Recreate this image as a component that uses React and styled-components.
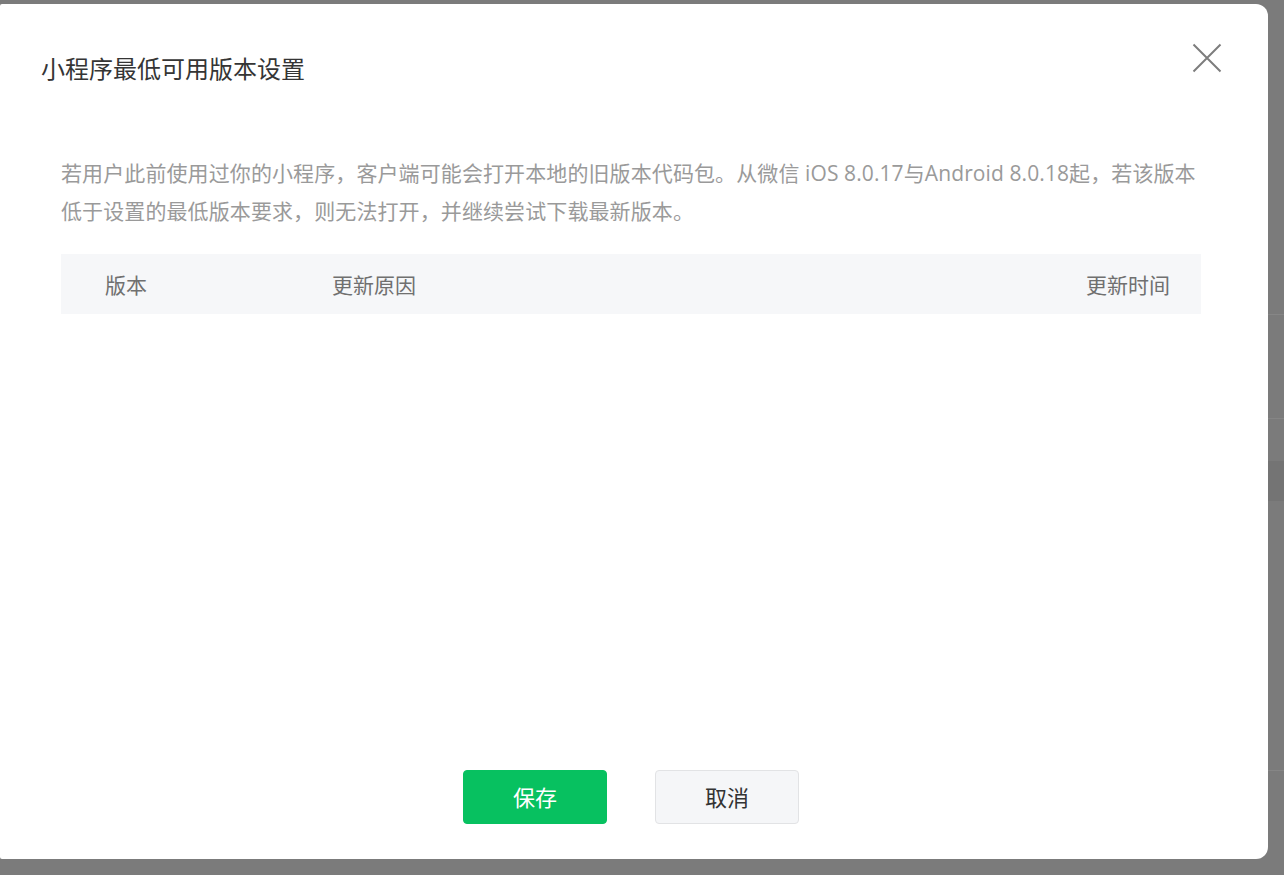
import styled, { createGlobalStyle } from "styled-components";

const GlobalStyle = createGlobalStyle`
  html, body {
    margin: 0;
    padding: 0;
  }
  body {
    font-family: "Open Sans", "Noto Sans CJK SC", sans-serif;
    background: #7b7b7b;
  }
`;

const CloseIcon = () => (
  <svg width="30" height="30" viewBox="0 0 30 30">
    <path d="M1.5 1.5 L28.5 28.5 M28.5 1.5 L1.5 28.5" stroke="#7d7d7d" strokeWidth="2" fill="none" />
  </svg>
);

const App = () => {
  return (
    <Page>
      <GlobalStyle />
      <Dialog>
        <Header>
          <h3>小程序最低可用版本设置</h3>
          <CloseButton aria-label="关闭">
            <CloseIcon />
          </CloseButton>
        </Header>
        <Body>
          <p className="desc">
            若用户此前使用过你的小程序，客户端可能会打开本地的旧版本代码包。从微信 iOS 8.0.17与Android 8.0.18起，若该版本低于设置的最低版本要求，则无法打开，并继续尝试下载最新版本。
          </p>
          <TableHead>
            <Cell $w="271px" $pl="44px">版本</Cell>
            <Cell $grow>更新原因</Cell>
            <Cell $align="right" $pr="31px">更新时间</Cell>
          </TableHead>
        </Body>
        <Footer>
          <Button $primary>保存</Button>
          <Button>取消</Button>
        </Footer>
      </Dialog>
    </Page>
  );
};

const Page = styled.div`
  height: 875px;
  box-sizing: border-box;
  padding-top: 4px;
  overflow: hidden;
  background-color: #7b7b7b;
  background-image:
    linear-gradient(#868686, #868686),
    linear-gradient(#858585, #858585),
    linear-gradient(#747474, #747474),
    linear-gradient(#868686, #868686);
  background-size: 100% 1px, 100% 1px, 100% 40px, 100% 1px;
  background-position: 0 314px, 0 418px, 0 461px, 0 770px;
  background-repeat: no-repeat;
`;

const Dialog = styled.div`
  width: 1268px;
  height: 855px;
  background: #fff;
  border-radius: 2px 12px 12px 2px;
  display: flex;
  flex-direction: column;
  box-sizing: border-box;
`;

const Header = styled.div`
  display: flex;
  justify-content: space-between;
  align-items: flex-start;
  padding: 39px 46px 0 41px;

  h3 {
    margin: 9px 0 0;
    font-size: 24px;
    line-height: 34px;
    font-weight: 400;
    color: #353535;
  }
`;

const CloseButton = styled.button`
  border: none;
  background: none;
  padding: 0;
  width: 30px;
  height: 30px;
  cursor: pointer;
  display: flex;
`;

const Body = styled.div`
  padding: 0 67px 0 61px;

  .desc {
    margin: 68px 0 24px;
    max-width: 1140px;
    font-size: 21px;
    line-height: 38px;
    color: #9a9a9a;
    letter-spacing: 0.1px;
  }
`;

const TableHead = styled.div`
  display: flex;
  align-items: center;
  height: 60px;
  background: #f6f7f9;
  font-size: 21px;
  color: #707070;
`;

const Cell = styled.div`
  width: ${(p) => p.$w || "auto"};
  flex: ${(p) => (p.$grow ? 1 : "none")};
  padding-left: ${(p) => p.$pl || 0};
  padding-right: ${(p) => p.$pr || 0};
  text-align: ${(p) => p.$align || "left"};
  box-sizing: border-box;
`;

const Footer = styled.div`
  margin-top: auto;
  display: flex;
  justify-content: center;
  gap: 48px;
  padding: 0 6px 35px 0;
`;

const Button = styled.button`
  width: 144px;
  height: 54px;
  padding: 0 0 3px;
  border-radius: 4px;
  font-family: inherit;
  font-size: 22px;
  cursor: pointer;
  background: ${(p) => (p.$primary ? "#07c160" : "#f5f6f8")};
  color: ${(p) => (p.$primary ? "#fff" : "#333")};
  border: 1px solid ${(p) => (p.$primary ? "#07c160" : "#e2e3e5")};
`;

export default App;
